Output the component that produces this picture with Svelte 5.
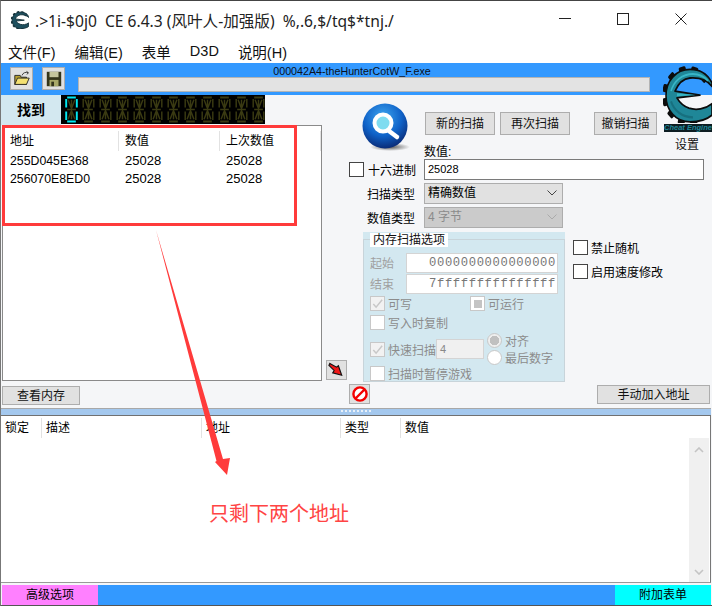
<script>
  const leds = Array.from({ length: 12 }, (_, i) => i);
  const rows = [
    ['255D045E368', '25028', '25028'],
    ['256070E8ED0', '25028', '25028']
  ];
  const lower = [
    ['锁定', 41],
    ['描述', 160],
    ['地址', 139],
    ['类型', 60],
    ['数值', 60]
  ];
  const teeth = Array.from({ length: 12 }, (_, i) => i * 30 + 15);
  const ePath = 'M49 15 C44 6 35 3 27 3 C13 3 3 13 3 26 C3 39 13 49 27 49 C35 49 44 47 49 43 L49 33 C42 38 33 39 26 37 C20 35 16 31 14 28 L37 25.5 L12 22 C15 16 20 11 27 10.5 C35 10 44 12 49 18 Z';
</script>

{#snippet gear(small)}
  <svg class={small ? 'app-icon' : 'logo'} viewBox="0 0 50 50" preserveAspectRatio="none" aria-hidden="true">
    <g fill={small ? '#16323a' : '#0c0c0c'}>
      {#each teeth as t}
        {#if t !== 75 && t !== 105}
          <rect x="22" y="0" width="7" height="7" rx="1.5" transform={`rotate(${t} 25 26)`} />
        {/if}
      {/each}
    </g>
    <path d={ePath} fill={small ? '#1d4f5e' : '#1f8798'} stroke={small ? '#16323a' : '#0c0c0c'} stroke-width={small ? 2.5 : 1.6} stroke-linejoin="round" />
    {#if !small}
      <path d="M14 24 L33 25.5 L14 26.5 Z" fill="#35b4c4" />
      <path d="M8 22 C11 13 19 7 30 7 C36 7 41 9 45 13" fill="none" stroke="#38b6c6" stroke-width="1.6" />
      <path d="M8 31 C11 39 19 45 30 45" fill="none" stroke="#17707f" stroke-width="2" />
    {/if}
  </svg>
{/snippet}

{#snippet check(kind)}
  <span class="cb {kind}">
    {#if kind === 'ticked'}
      <svg viewBox="0 0 14 14" aria-hidden="true"><path d="M2.5 7.5 L5.5 11 L12 3" fill="none" stroke="#c8c8c8" stroke-width="1.6" /></svg>
    {:else if kind === 'mixed'}
      <i></i>
    {/if}
  </span>
{/snippet}

<div class="window">
  <header class="titlebar">
    {@render gear(true)}
    <span class="title">.&gt;1i-$0j0&nbsp; CE 6.4.3 (风叶人-加强版)&nbsp; %,.6,$/tq$*tnj./</span>
    <div class="caption">
      <svg viewBox="0 0 12 12" aria-hidden="true"><path d="M0 5.5H12" stroke="#222" /></svg>
      <svg viewBox="0 0 12 12" aria-hidden="true"><rect x=".5" y=".5" width="11" height="11" fill="none" stroke="#222" /></svg>
      <svg viewBox="0 0 12 12" aria-hidden="true"><path d="M.5 .5L11.5 11.5M11.5 .5L.5 11.5" stroke="#222" /></svg>
    </div>
  </header>

  <nav class="menu">
    <span>文件(F)</span><span>编辑(E)</span><span>表单</span><span>D3D</span><span>说明(H)</span>
  </nav>

  <section class="toolbar">
    <button class="tool" aria-label="打开">
      <svg viewBox="0 0 20 20" aria-hidden="true">
        <path d="M2 6h6l1 2h6v8H2z" fill="#b8a030" stroke="#222" />
        <path d="M2 16l3-7h13l-3 7z" fill="#f4e070" stroke="#222" />
        <path d="M10 6c1-3 4-4 7-3m0 0l-2-1.5m2 1.5l-1.5 2" fill="none" stroke="#333" />
      </svg>
    </button>
    <button class="tool" aria-label="保存">
      <svg viewBox="0 0 20 20" aria-hidden="true">
        <rect x="2" y="2" width="16" height="16" fill="#34341a" />
        <rect x="5" y="2" width="10" height="6" fill="#c4c49c" />
        <rect x="5" y="11" width="10" height="7" fill="#a8a868" />
        <rect x="7" y="13" width="3" height="5" fill="#34341a" />
      </svg>
    </button>
    <div class="progress-wrap">
      <div class="process">000042A4-theHunterCotW_F.exe</div>
      <div class="progress"></div>
    </div>
  </section>

  <main class="main">
    <div class="left">
      <div class="tabs">
        <div class="tab">找到</div>
        <div class="led">
          {#each leds as i}
            <svg viewBox="0 0 15 28" class="digit" aria-hidden="true">
              <g fill="none" stroke={i === 0 ? '#00e8f0' : '#3a3a12'} stroke-width="2">
                <path d="M3 1.5H12M3 26.5H12" />
                {#if i === 0}<path d="M2 3V12M13 3V12M2 16V25M13 16V25" />{/if}
              </g>
              <g fill="none" stroke="#3a3a12" stroke-width="1.5">
                <path d="M7.5 4V24M3 14H12M4 4L7 12M11 4L8 12M4 24L7 16M11 24L8 16" />
                {#if i !== 0}<path d="M2 3V12M13 3V12M2 16V25M13 16V25" />{/if}
              </g>
            </svg>
          {/each}
        </div>
      </div>
      <div class="results">
        <div class="res-head">
          <span class="c1">地址</span><span class="c2">数值</span><span class="c3">上次数值</span>
        </div>
        <div class="res-body">
          {#each rows as r}
            <div class="res-row"><span class="c1">{r[0]}</span><span class="c2">{r[1]}</span><span class="c3">{r[2]}</span></div>
          {/each}
        </div>
      </div>
      <button class="btn view">查看内存</button>
    </div>

    <div class="right">
      <div class="arrow-col">
        <button class="small-btn" aria-label="转移">
          <svg viewBox="0 0 18 16" aria-hidden="true">
            <path d="M2 1L9 5L11 3.5L14.5 13.5L5 11L6.5 8.5L1 3z" fill="#f01818" stroke="#111" stroke-width="1.2" />
          </svg>
        </button>
        <button class="small-btn stop" aria-label="停止">
          <svg viewBox="0 0 18 18" aria-hidden="true">
            <circle cx="9" cy="9" r="6.6" fill="#fff" stroke="#f40000" stroke-width="2.4" />
            <path d="M4.5 13.5L13.5 4.5" stroke="#f40000" stroke-width="2.4" />
          </svg>
        </button>
      </div>

      <div class="form">
        <div class="scan-row">
          <svg class="search" viewBox="0 0 48 50" aria-hidden="true">
            <defs>
              <radialGradient id="orb" cx="45%" cy="30%" r="70%">
                <stop offset="0" stop-color="#3ea6f0" />
                <stop offset=".6" stop-color="#0f62c8" />
                <stop offset="1" stop-color="#0a2c78" />
              </radialGradient>
              <radialGradient id="shade" cx="50%" cy="50%" r="50%">
                <stop offset="0" stop-color="#555" />
                <stop offset="1" stop-color="#f5f6f8" />
              </radialGradient>
            </defs>
            <ellipse cx="28" cy="44" rx="20" ry="4" fill="url(#shade)" />
            <circle cx="23" cy="23" r="22.5" fill="url(#orb)" />
            <path d="M27 28L35 34" stroke="#fff" stroke-width="4.5" stroke-linecap="round" />
            <circle cx="21" cy="20" r="8.5" fill="#7fdcf0" stroke="#fff" stroke-width="4" />
          </svg>
          <button class="btn scan b1">新的扫描</button>
          <button class="btn scan b2">再次扫描</button>
          <button class="btn scan b3">撤销扫描</button>
        </div>

        <div class="value-label">数值:</div>
        <div class="value-row">
          {@render check('plain')}
          <span class="hex">十六进制</span>
          <div class="input">25028</div>
        </div>
        <div class="sel-row">
          <span class="sel-label">扫描类型</span>
          <div class="select">精确数值
            <svg viewBox="0 0 10 6" aria-hidden="true"><path d="M.5 .5L5 5L9.5 .5" fill="none" stroke="#444" /></svg>
          </div>
        </div>
        <div class="sel-row">
          <span class="sel-label">数值类型</span>
          <div class="select off">4 字节
            <svg viewBox="0 0 10 6" aria-hidden="true"><path d="M.5 .5L5 5L9.5 .5" fill="none" stroke="#aaa" /></svg>
          </div>
        </div>

        <div class="lower-form">
          <div class="group">
            <div class="legend">内存扫描选项</div>
            <div class="range first-range"><span>起始</span><div class="addr">0000000000000000</div></div>
            <div class="range"><span>结束</span><div class="addr">7fffffffffffffff</div></div>
            <div class="opt-row">
              <div class="opt w">{@render check('ticked')}<span>可写</span></div>
              <div class="opt">{@render check('mixed')}<span>可运行</span></div>
            </div>
            <div class="opt-row"><div class="opt">{@render check('plain light')}<span>写入时复制</span></div></div>
            <div class="fast">
              <div class="opt">{@render check('ticked')}<span>快速扫描</span></div>
              <div class="num">4</div>
              <div class="radios">
                <div class="radio"><span class="dot on"></span><span>对齐</span></div>
                <div class="radio"><span class="dot"></span><span>最后数字</span></div>
              </div>
            </div>
            <div class="opt-row last"><div class="opt">{@render check('plain light')}<span>扫描时暂停游戏</span></div></div>
          </div>
          <div class="side">
            <div class="side-opt">{@render check('plain')}<span>禁止随机</span></div>
            <div class="side-opt">{@render check('plain')}<span>启用速度修改</span></div>
            <button class="btn manual">手动加入地址</button>
          </div>
        </div>
      </div>
    </div>
  </main>

  <div class="splitter"><div class="grip"></div></div>

  <section class="lower">
    <div class="low-head">
      {#each lower as [t, w]}
        <span style={`width:${w}px`}>{t}</span>
      {/each}
    </div>
    <div class="scrollbar">
      <svg viewBox="0 0 10 6" aria-hidden="true"><path d="M1 5L5 1L9 5" fill="none" stroke="#c4c4c4" stroke-width="1.6" /></svg>
      <svg viewBox="0 0 10 6" aria-hidden="true"><path d="M1 1L5 5L9 1" fill="none" stroke="#c4c4c4" stroke-width="1.6" /></svg>
    </div>
  </section>

  <footer class="footer">
    <div class="adv">高级选项</div>
    <div class="mid"></div>
    <div class="add">附加表单</div>
  </footer>

  <div class="red-box"></div>
  <svg class="big-arrow" viewBox="0 0 712 606" aria-hidden="true">
    <path d="M156 230 L223 459 L230 458 L227 475 L215 462 L216.5 461 Z" fill="#ff3b3b" />
  </svg>
  <div class="note">只剩下两个地址</div>
  <div class="settings-logo">
    {@render gear(false)}
    <span class="ce">Cheat Engine</span>
    <span class="settings">设置</span>
  </div>
</div>

<style>
  :global(body) { margin: 0; background: #fff; }
  .window {
    position: relative;
    box-sizing: border-box;
    width: 712px;
    height: 606px;
    display: flex;
    flex-direction: column;
    overflow: hidden;
    background: #f5f6f8;
    border-top: 1px solid #444;
    border-left: 1px solid #777;
    border-bottom: 1px solid #555;
    font-family: "Liberation Sans", "Noto Sans CJK SC", sans-serif;
    font-size: 12px;
    color: #000;
  }
  button { font: inherit; padding: 0; color: inherit; }

  .titlebar {
    height: 38px;
    flex: none;
    display: flex;
    align-items: center;
    background: #fff;
    padding-left: 10px;
  }
  .app-icon { width: 18px; height: 18px; margin-right: 6px; }
  .title { font-family: "Noto Sans", "Noto Sans CJK SC", sans-serif; font-size: 15.6px; color: #222; white-space: pre; }
  .caption { margin-left: auto; display: flex; align-items: center; gap: 46px; padding-right: 25px; margin-bottom: 2px; }
  .caption svg { width: 12px; height: 12px; display: block; }

  .menu {
    height: 24px;
    flex: none;
    background: #fff;
    display: flex;
    align-items: center;
    padding-left: 7px;
    gap: 19px;
    font-size: 14.5px;
    color: #111;
  }

  .toolbar {
    height: 32px;
    flex: none;
    background: #3399ff;
    display: flex;
    align-items: flex-start;
    padding-left: 9px;
    gap: 9px;
  }
  .tool {
    width: 23px;
    height: 23px;
    margin-top: 4px;
    background: #e1e1e1;
    border: 1px solid #adadad;
    display: flex;
    align-items: center;
    justify-content: center;
  }
  .tool svg { width: 18px; height: 18px; }
  .progress-wrap { margin-left: 4px; width: 572px; height: 32px; }
  .process { height: 14px; line-height: 14px; text-align: center; font-size: 10.7px; margin-top: 1px; padding-right: 24px; white-space: nowrap; color: #0a1020; }
  .progress { height: 15px; margin-top: -1px; background: #e3e3e3; border: 1px solid #b4b4b4; box-sizing: border-box; }

  .main { flex: 1; min-height: 0; display: flex; }
  .left { width: 321px; flex: none; display: flex; flex-direction: column; }
  .tabs { display: flex; height: 30px; flex: none; }
  .tab {
    width: 60px;
    background: #d3e8f0;
    text-align: center;
    line-height: 30px;
    font-size: 14px;
    font-weight: 700;
  }
  .led {
    width: 204px;
    height: 29px;
    background: #000;
    display: flex;
    padding: 1px 0 0 3px;
    box-sizing: border-box;
  }
  .digit { width: 15px; height: 27px; margin-right: 2px; flex: none; display: block; }
  .results {
    margin-left: 1px;
    width: 320px;
    height: 256px;
    box-sizing: border-box;
    background: #fff;
    border: 1px solid #8a8a8a;
  }
  .res-head, .res-row { display: flex; white-space: nowrap; }
  .res-head span { height: 20px; line-height: 20px; margin-top: 5px; border-right: 1px solid #e2e2e2; box-sizing: border-box; }
  .res-body { padding-top: 1px; }
  .res-row { height: 18px; line-height: 18px; font-size: 13px; }
  .res-row .c1 { font-size: 12.3px; }
  .c1 { width: 116px; padding-left: 7px; box-sizing: border-box; }
  .c2 { width: 101px; padding-left: 6px; box-sizing: border-box; }
  .c3 { width: 101px; padding-left: 6px; box-sizing: border-box; }

  .btn {
    background: #e1e1e1;
    border: 1px solid #adadad;
    box-sizing: border-box;
    font-size: 12px;
    color: #111;
    line-height: 1;
  }
  .view { width: 78px; height: 19px; margin: 5px 0 0 1px; }

  .right { flex: 1; display: flex; min-width: 0; }
  .arrow-col { width: 27px; flex: none; display: flex; flex-direction: column; padding-top: 265px; padding-left: 4px; box-sizing: border-box; }
  .small-btn {
    width: 21px;
    height: 20px;
    background: #e1e1e1;
    border: 1px solid #adadad;
    display: flex;
    align-items: center;
    justify-content: center;
    box-sizing: border-box;
  }
  .small-btn svg { width: 17px; height: 16px; }
  .stop { margin: 4px 0 0 23px; }
  .stop svg { width: 18px; height: 18px; }

  .form { flex: 1; min-width: 0; margin-left: -26px; padding-left: 26px; }
  .scan-row { position: relative; height: 49px; display: flex; padding-left: 76px; padding-top: 17px; box-sizing: border-box; }
  .search { position: absolute; left: 13px; top: 8px; width: 48px; height: 50px; }
  .scan { height: 23px; width: 70px; }
  .b2 { margin-left: 5px; }
  .b3 { margin-left: 24px; width: 63px; }

  .value-label { margin-left: 75px; height: 15px; line-height: 16px; font-size: 12px; }
  .value-row { display: flex; align-items: center; height: 21px; }
  .hex { margin-left: 4px; width: 56px; white-space: nowrap; }
  .input {
    width: 280px;
    height: 21px;
    box-sizing: border-box;
    background: #fff;
    border: 1px solid #7a7a7a;
    padding-left: 3px;
    line-height: 19px;
    font-size: 11px;
  }
  .sel-row { display: flex; align-items: center; height: 21px; margin-top: 3px; }
  .sel-label { margin-left: 18px; width: 57px; }
  .select {
    position: relative;
    width: 139px;
    height: 21px;
    box-sizing: border-box;
    background: #e1e1e1;
    border: 1px solid #adadad;
    padding-left: 3px;
    line-height: 19px;
    font-size: 12px;
  }
  .select svg { position: absolute; right: 5px; top: 6px; width: 10px; height: 6px; }
  .off { background: #cbcbcb; color: #8a8a8a; }

  .lower-form { display: flex; margin-top: 4px; }
  .group {
    margin: 0 0 0 14px;
    width: 202px;
    height: 150px;
    box-sizing: border-box;
    background: #d3e8f0;
    position: relative;
    color: #8c8c8c;
    overflow: hidden;
  }
  .group::after {
    content: "";
    position: absolute;
    left: 0; right: 0; top: 7px; bottom: 0;
    border: 1px solid #c8d4da;
    pointer-events: none;
  }
  .legend {
    position: absolute;
    left: 7px;
    top: 1px;
    z-index: 1;
    padding: 0 3px;
    background: #fff;
    color: #111;
    font-size: 12px;
    line-height: 14px;
  }
  .range { display: flex; align-items: center; height: 21px; }
  .first-range { margin-top: 20px; }
  .range span { margin-left: 7px; width: 36px; font-size: 12px; color: #a0a0a0; }
  .addr {
    width: 152px;
    height: 20px;
    box-sizing: border-box;
    background: #fff;
    border: 1px solid #d4d4d4;
    font-family: "Liberation Mono", monospace;
    font-size: 12.2px;
    line-height: 18px;
    text-align: right;
    padding-right: 1px;
    color: #777;
    letter-spacing: .62px;
    white-space: nowrap;
  }
  .opt-row { display: flex; height: 19px; align-items: center; margin-left: 7px; }
  .opt-row.last { margin-top: -2px; }
  .opt { display: flex; align-items: center; gap: 3px; color: #8c8c8c; white-space: nowrap; }
  .opt.w { width: 100px; }
  .fast { display: flex; align-items: center; height: 34px; margin-left: 7px; }
  .num { width: 48px; height: 20px; margin-left: 0; box-sizing: border-box; background: #f0f0f0; border: 1px solid #d4d4d4; padding-left: 3px; line-height: 18px; color: #888; font-size: 11px; }
  .radios { margin-left: 3px; display: flex; flex-direction: column; gap: 1px; }
  .radio { display: flex; align-items: center; gap: 3px; color: #8c8c8c; height: 16px; white-space: nowrap; font-size: 12px; }
  .dot { width: 15px; height: 15px; border-radius: 50%; background: #fff; border: 1px solid #c8c8c8; box-sizing: border-box; }
  .dot.on { background: radial-gradient(circle, #c0c0c0 0 4.5px, #eee 5px); }

  .cb {
    width: 15px;
    height: 15px;
    flex: none;
    box-sizing: border-box;
    background: #fff;
    border: 1px solid #444;
    display: inline-flex;
    align-items: center;
    justify-content: center;
  }
  .cb.light, .cb.ticked, .cb.mixed { border-color: #c8c8c8; }
  .cb.ticked { background: #f2f2f2; }
  .cb svg { width: 13px; height: 13px; }
  .cb i { width: 8px; height: 8px; background: #c4c4c4; display: block; }

  .side { position: relative; flex: 1; padding-left: 8px; padding-top: 8px; }
  .side-opt { display: flex; align-items: center; gap: 3px; height: 15px; margin-bottom: 9px; white-space: nowrap; }
  .manual { position: absolute; left: 32px; top: 153px; width: 113px; height: 19px; }

  .splitter {
    flex: none;
    background: #a4c8ee;
    border-top: 1px solid #a8a8a8;
    border-bottom: 1px solid #707070;
    height: 6px;
    margin-top: 2px;
    margin-right: 1px;
    position: relative;
  }
  .grip { position: absolute; left: 340px; top: 1px; width: 30px; height: 2px; background: repeating-linear-gradient(90deg, #e8f0f8 0 2px, transparent 2px 4px); }

  .lower {
    height: 167px;
    flex: none;
    background: #fff;
    position: relative;
    margin-right: 1px;
    border-bottom: 1px solid #999;
    border-right: 1px solid #777;
    box-sizing: border-box;
  }
  .low-head { display: flex; padding-top: 2px; }
  .low-head span {
    box-sizing: border-box;
    height: 20px;
    line-height: 20px;
    padding-left: 4px;
    border-right: 1px solid #e2e2e2;
    font-size: 12px;
    white-space: nowrap;
  }
  .low-head span:last-child { border-right: 0; }
  .scrollbar {
    position: absolute;
    right: 1px;
    top: 22px;
    bottom: 0;
    width: 20px;
    background: #f0f0f0;
    display: flex;
    flex-direction: column;
    justify-content: space-between;
    align-items: center;
    padding: 9px 0 7px;
    box-sizing: border-box;
  }
  .scrollbar svg { width: 10px; height: 6px; }

  .footer { height: 20px; flex: none; margin: 2px 1px 0 1px; display: flex; line-height: 20px; text-align: center; font-size: 12px; }
  .adv { width: 96px; background: #ff80ff; }
  .mid { flex: 1; background: #3399ff; }
  .add { width: 96px; background: #00ffff; }

  .red-box {
    position: absolute;
    left: 1px;
    top: 124px;
    width: 295px;
    height: 101px;
    box-sizing: border-box;
    border: 3px solid #ff3b3b;
  }
  .big-arrow { position: absolute; left: -1px; top: -1px; width: 712px; height: 606px; pointer-events: none; }
  .note {
    position: absolute;
    left: 208px;
    top: 500px;
    font-size: 20px;
    line-height: 26px;
    color: #f44;
    white-space: nowrap;
  }
  .settings-logo { position: absolute; left: 662px; top: 65px; width: 50px; height: 88px; }
  .logo { width: 50px; height: 57px; display: block; }
  .ce { position: absolute; left: 1px; top: 58px; width: 50px; background: #0d1d22; color: #1f8798; font: italic 700 7.5px/8px "Liberation Sans", sans-serif; white-space: nowrap; overflow: hidden; }
  .settings { position: absolute; left: 12px; top: 72px; font-size: 12px; line-height: 15px; color: #111; }
</style>
